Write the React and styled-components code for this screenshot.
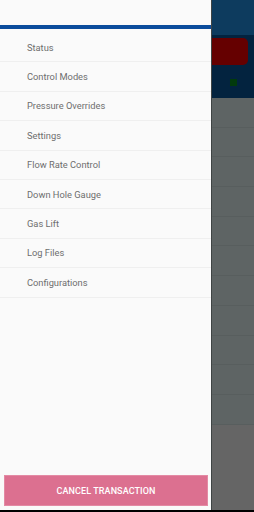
import React from "react";
import styled, { createGlobalStyle } from "styled-components";

const menuItems = [
  "Status",
  "Control Modes",
  "Pressure Overrides",
  "Settings",
  "Flow Rate Control",
  "Down Hole Gauge",
  "Gas Lift",
  "Log Files",
  "Configurations",
];

const GlobalStyle = createGlobalStyle`
  html, body {
    margin: 0;
    padding: 0;
    background: #000000;
  }
  body {
    font-family: Roboto, "Liberation Sans", sans-serif;
  }
`;

const App = () => {
  return (
    <>
      <GlobalStyle />
      <Screen>
        <Body>
          <Drawer>
            <DrawerHeader />
            <Menu>
              {menuItems.map((item) => (
                <MenuItem key={item}>{item}</MenuItem>
              ))}
            </Menu>
            <Footer>
              <CancelButton>Cancel Transaction</CancelButton>
            </Footer>
          </Drawer>

          <Behind>
            <AppBar />
            <SubBar>
              <RedButton />
              <StatusDot />
            </SubBar>
            <Rows>
              {Array.from({ length: 11 }).map((_, i) => (
                <Row key={i} />
              ))}
            </Rows>
            <BottomArea />
          </Behind>
        </Body>
        <NavStrip />
      </Screen>
    </>
  );
};

export default App;

export const Screen = styled.div`
  width: 254px;
  height: 512px;
  display: flex;
  flex-direction: column;
  overflow: hidden;
`;

export const Body = styled.div`
  flex: 1;
  display: flex;
  flex-direction: row;
  min-height: 0;
`;

export const Drawer = styled.div`
  width: 211px;
  flex-shrink: 0;
  display: flex;
  flex-direction: column;
  background-color: #fafafa;
  border-right: 1px solid #3f4444;
`;

export const DrawerHeader = styled.div`
  height: 25px;
  background-color: #fafafa;
  border-bottom: 4px solid #0b4c9c;
`;

export const Menu = styled.div`
  display: flex;
  flex-direction: column;
  padding-top: 4px;
`;

export const MenuItem = styled.div`
  height: 28.4px;
  display: flex;
  align-items: center;
  padding-left: 27px;
  font-size: 9.3px;
  color: #6e6e6e;
  border-bottom: 1px solid #efefef;
`;

export const Footer = styled.div`
  margin-top: auto;
  padding: 0 3px 4px 4px;
`;

export const CancelButton = styled.div`
  height: 31px;
  display: flex;
  align-items: center;
  justify-content: center;
  background-color: #dc7090;
  border: 1px solid #e38aa4;
  box-sizing: border-box;
  color: #ffffff;
  font-size: 9px;
  font-weight: 500;
  letter-spacing: 0.1px;
  text-transform: uppercase;
`;

export const Behind = styled.div`
  flex: 1;
  display: flex;
  flex-direction: column;
  background-color: #656565;
`;

export const AppBar = styled.div`
  height: 35px;
  background-color: #0d3b5e;
`;

export const SubBar = styled.div`
  height: 63px;
  background-color: #03233f;
  display: flex;
  flex-direction: column;
  align-items: flex-end;
  padding-top: 3px;
  box-sizing: border-box;
`;

export const RedButton = styled.div`
  width: 36px;
  height: 27px;
  margin-right: 6px;
  border-radius: 0 5px 5px 0;
  background-color: #650000;
`;

export const StatusDot = styled.div`
  width: 7px;
  height: 7px;
  margin-top: 14px;
  margin-right: 17px;
  background-color: #023a0c;
`;

export const Rows = styled.div`
  display: flex;
  flex-direction: column;
  background-color: #5e6464;
`;

export const Row = styled.div`
  height: 28.7px;
  border-bottom: 1px solid #585e5e;
`;

export const BottomArea = styled.div`
  flex: 1;
  background-color: #656565;
`;

export const NavStrip = styled.div`
  height: 2px;
  background-color: #000000;
`;
